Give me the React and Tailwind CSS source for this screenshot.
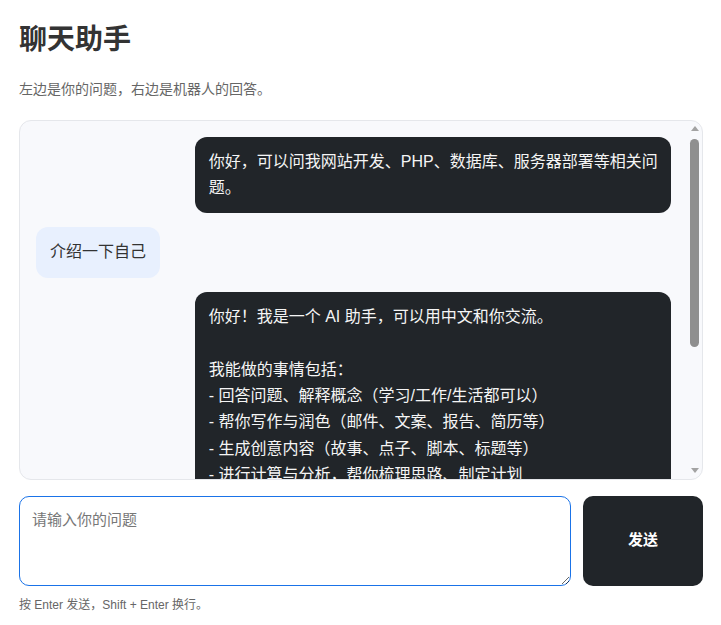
import { useState } from 'react';

const botIntro = `你好！我是一个 AI 助手，可以用中文和你交流。

我能做的事情包括：
- 回答问题、解释概念（学习/工作/生活都可以）
- 帮你写作与润色（邮件、文案、报告、简历等）
- 生成创意内容（故事、点子、脚本、标题等）
- 进行计算与分析，帮你梳理思路、制定计划
- 编程与技术支持（网站开发、PHP、数据库等）
- 翻译与语言学习（中英互译、语法讲解）

我的局限：
- 我可能会出错，重要信息请自行核实

有什么想聊的，随时告诉我！`;

const initialMessages = [
  { id: 1, role: 'bot', text: '你好，可以问我网站开发、PHP、数据库、服务器部署等相关问题。' },
  { id: 2, role: 'user', text: '介绍一下自己' },
  { id: 3, role: 'bot', text: botIntro },
];

const Arrow = ({ down }) => (
  <div className="flex h-[16px] items-center justify-center">
    <svg width="8" height="5" viewBox="0 0 8 5">
      {down ? <path d="M0 0h8L4 5z" fill="#a3a3a3" /> : <path d="M0 5h8L4 0z" fill="#a3a3a3" />}
    </svg>
  </div>
);

const App = () => {
  const [messages] = useState(initialMessages);
  const [input, setInput] = useState('');

  return (
    <div
      className="min-h-screen bg-white pt-[23px] pl-[19px] pr-[18px] text-[#333]"
      style={{ fontFamily: '"Liberation Sans", "Noto Sans CJK SC", sans-serif' }}
    >
      <h1 className="text-[28px] font-bold leading-[1.2] text-[#333]">聊天助手</h1>
      <p className="mt-[22px] text-[14px] leading-[21px] text-[#666]">左边是你的问题，右边是机器人的回答。</p>

      {/* messages + scrollbar */}
      <div className="mt-[20px] flex h-[360px] overflow-hidden rounded-[12px] border border-[#e5e7eb] bg-[#f8f9fc]">
        <div className="flex flex-1 flex-col gap-[14px] overflow-y-auto p-4">
          {messages.map(m =>
            m.role === 'bot' ? (
              <div
                key={m.id}
                className="self-end w-[75%] shrink-0 rounded-[12px] bg-[#212529] pl-[14px] pr-[10px] py-[12px] text-[16px] leading-[1.65] text-[#f5f5f5] whitespace-pre-wrap"
              >
                {m.text}
              </div>
            ) : (
              <div
                key={m.id}
                className="self-start max-w-[75%] shrink-0 rounded-[12px] bg-[#e8f0fe] px-[14px] py-[12px] text-[16px] leading-[1.65] text-[#333]"
              >
                {m.text}
              </div>
            )
          )}
        </div>
        <div className="flex w-[15px] flex-col">
          <Arrow />
          <div className="flex-1">
            <div className="mx-auto mt-[2px] h-[208px] w-[9px] rounded-full bg-[#8f8f8f]" />
          </div>
          <Arrow down />
        </div>
      </div>

      <div className="mt-4 flex h-[90px] gap-3">
        <textarea
          value={input}
          onChange={e => setInput(e.target.value)}
          placeholder="请输入你的问题"
          className="flex-1 rounded-[10px] border border-[#1a73e8] bg-white p-3 text-[15px] leading-[22px] text-[#333] placeholder:text-[#777] outline-none"
        />
        <button className="w-[120px] rounded-[10px] bg-[#212529] text-[15px] font-bold text-white">发送</button>
      </div>

      <p className="mt-[10px] text-[12px] leading-[18px] text-[#666]">按 Enter 发送，Shift + Enter 换行。</p>
    </div>
  );
};

export default App;
